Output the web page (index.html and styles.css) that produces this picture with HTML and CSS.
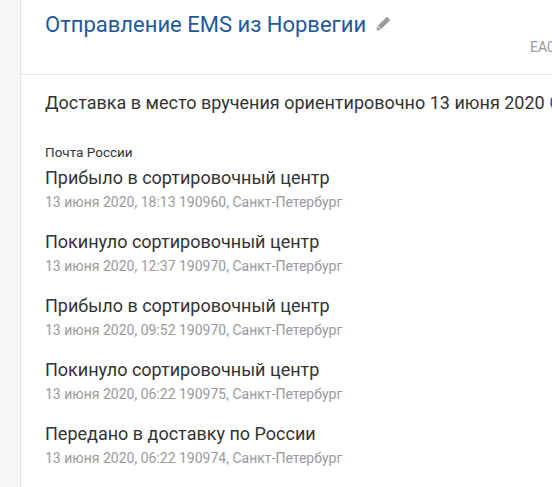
FILE: index.html
```html
<!DOCTYPE html>
<html>
<head>
    <title>Отправление EMS из Норвегии</title>
    <link rel="stylesheet" href="styles.css">
</head>
<body>
    <div class="page">
        <div class="sidebar"></div>
        <div class="main">
            <!-- Header -->
            <div class="header">
                <h1 class="title">
                    Отправление EMS из Норвегии
                    <svg class="edit" width="17" height="17" viewBox="0 0 16 16">
                        <path d="M11.2 1.6l3.2 3.2-8.6 8.6-3.2-3.2z" fill="#9a9a9a"/>
                        <path d="M2.2 10.6l3.2 3.2-4.1 0.9z" fill="#9a9a9a"/>
                    </svg>
                </h1>
                <div class="track">EA012345678NO</div>
            </div>

            <div class="content">
                <p class="delivery">Доставка в место вручения ориентировочно 13 июня 2020 <span class="more">Сменить</span></p>

                <div class="carrier">Почта России</div>
                <div class="events">
                    <div class="event">
                        <div class="event-title">Прибыло в сортировочный центр</div>
                        <div class="event-meta">13 июня 2020, 18:13 190960, Санкт-Петербург</div>
                    </div>
                    <div class="event">
                        <div class="event-title">Покинуло сортировочный центр</div>
                        <div class="event-meta">13 июня 2020, 12:37 190970, Санкт-Петербург</div>
                    </div>
                    <div class="event">
                        <div class="event-title">Прибыло в сортировочный центр</div>
                        <div class="event-meta">13 июня 2020, 09:52 190970, Санкт-Петербург</div>
                    </div>
                    <div class="event">
                        <div class="event-title">Покинуло сортировочный центр</div>
                        <div class="event-meta">13 июня 2020, 06:22 190975, Санкт-Петербург</div>
                    </div>
                    <div class="event">
                        <div class="event-title">Передано в доставку по России</div>
                        <div class="event-meta">13 июня 2020, 06:22 190974, Санкт-Петербург</div>
                    </div>
                </div>
            </div>
        </div>
    </div>
</body>
</html>
```

FILE: styles.css
```css
* {
    margin: 0;
    padding: 0;
    box-sizing: border-box;
}
body {
    font-family: Roboto, 'Liberation Sans', sans-serif;
    background: #ffffff;
    color: #333333;
    overflow: hidden;
}
.page {
    display: flex;
    min-height: 487px;
    width: 700px;
}
.sidebar {
    width: 21px;
    flex: none;
    background: #f7f7f7;
    border-right: 1px solid #e2e2e2;
}
.main {
    flex: 1;
}
.header {
    padding: 11px 0 19px 24px;
    border-bottom: 1px solid #e3e3e3;
}
.title {
    font-size: 22px;
    font-weight: 400;
    line-height: 28px;
    color: #1d5a9b;
    display: flex;
    align-items: center;
    gap: 9px;
}
.edit {
    margin-top: -3px;
}
.track {
    padding-left: 485px;
    font-size: 14px;
    line-height: 16px;
    color: #999999;
    white-space: nowrap;
}
.content {
    padding: 16px 0 0 24px;
}
.delivery {
    font-size: 18px;
    line-height: 24px;
    color: #333333;
    white-space: nowrap;
}
.delivery .more {
    color: #1d5a9b;
}
.carrier {
    margin-top: 29px;
    font-size: 13.5px;
    line-height: 16px;
    color: #333333;
}
.events {
    display: flex;
    flex-direction: column;
    gap: 20px;
    margin-top: 6px;
}
.event-title {
    font-size: 18px;
    line-height: 24px;
    color: #333333;
}
.event-meta {
    margin-top: 4px;
    font-size: 14px;
    line-height: 16px;
    color: #9a9a9a;
}
```
